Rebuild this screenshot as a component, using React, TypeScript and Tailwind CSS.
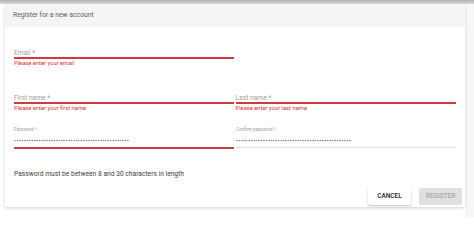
import React from "react";

const dots = (n: number) => "•".repeat(n);

function Field({
  label,
  error,
  width,
}: {
  label: string;
  error: string;
  width: string;
}) {
  return (
    <div className={width}>
      <div className="h-[10px] border-b-2 border-[#cf3a3a] text-[6.7px] leading-[8px] text-[#9e9e9e]">
        {label} <span>*</span>
      </div>
      <div className="mt-[1px] text-[5.8px] leading-[7px] text-[#d32f2f]">
        {error}
      </div>
    </div>
  );
}

function PasswordField({
  label,
  active,
  width,
}: {
  label: string;
  active?: boolean;
  width: string;
}) {
  return (
    <div className={width}>
      <div className="text-[4.5px] leading-[6px] text-[#9e9e9e]">{label} *</div>
      <div
        className={
          active
            ? "mt-[3px] h-[13px] border-b-2 border-[#cf3a3a]"
            : "mt-[3px] h-[12px] border-b border-[#e0e0e0]"
        }
      >
        <div className="overflow-hidden whitespace-nowrap pt-[1px] text-[5.5px] leading-[8px] tracking-[0.6px] text-[#333333]">
          {dots(47)}
        </div>
      </div>
    </div>
  );
}

export default function App() {
  return (
    <div
      className="h-[217px] w-[474px] overflow-hidden bg-white"
      style={{ fontFamily: "Roboto, 'Liberation Sans', sans-serif" }}
    >
      <div className="h-[4px] bg-gradient-to-b from-[#b0b0b0] to-[#dcdcdc]" />
      <div className="flex">
        <div className="w-[466px] pl-[5px]">
          <div className="w-[460px] bg-white shadow-[0_1px_3px_rgba(0,0,0,0.18)]">
            <div className="flex h-[23px] items-center bg-[#f5f5f5] pl-[8px] text-[6.8px] text-[#616161]">
              Register for a new account
            </div>
            <div className="px-[9px] pt-[22px]">
              <Field
                label="Email"
                error="Please enter your email"
                width="w-[220px]"
              />
              <div className="mt-[27px] flex gap-[2px]">
                <Field
                  label="First name"
                  error="Please enter your first name"
                  width="w-[220px]"
                />
                <Field
                  label="Last name"
                  error="Please enter your last name"
                  width="w-[221px]"
                />
              </div>
              <div className="mt-[15px] flex gap-[2px]">
                <PasswordField label="Password" active width="w-[220px]" />
                <PasswordField label="Confirm password" width="w-[220px]" />
              </div>
              <div className="mt-[21px] text-[6.7px] leading-[8px] text-[#424242]">
                Password must be between 8 and 30 characters in length
              </div>
            </div>
            <div className="mt-[10px] flex justify-end gap-[8px] pb-[2px] pr-[3px]">
              <button className="h-[17px] w-[43px] rounded-[2px] bg-white text-[6.5px] font-medium text-[#212121] shadow-[0_1px_2px_rgba(0,0,0,0.25)]">
                CANCEL
              </button>
              <button className="h-[17px] w-[43px] rounded-[2px] bg-[#e0e0e0] text-[6.5px] font-medium text-[#a8a8a8]">
                REGISTER
              </button>
            </div>
          </div>
        </div>
        <div className="h-[213px] flex-1 border-l border-[#ececec] bg-[#f7f7f7]" />
      </div>
    </div>
  );
}
